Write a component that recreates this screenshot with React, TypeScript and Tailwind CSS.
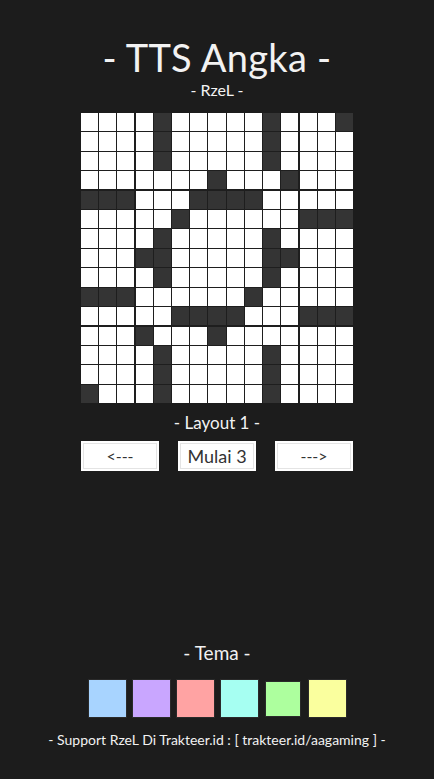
import React from "react";

const BLACK: number[][] = [
  [4, 10, 14],
  [4, 10],
  [4, 10],
  [7, 11],
  [0, 1, 2, 6, 7, 8, 9],
  [5, 12, 13, 14],
  [4, 10],
  [3, 4, 10, 11],
  [4, 10],
  [0, 1, 2, 9],
  [5, 6, 7, 8, 12, 13, 14],
  [3, 7],
  [4, 10],
  [4, 10],
  [0, 4, 10],
];

const SWATCHES = [
  { c: "bg-[#a8d4ff]", small: false },
  { c: "bg-[#c9a6ff]", small: false },
  { c: "bg-[#ffa3a3]", small: false },
  { c: "bg-[#a6fff2]", small: false },
  { c: "bg-[#adff9e]", small: true },
  { c: "bg-[#faff9e]", small: false },
];

export default function App() {
  const cells: React.ReactNode[] = [];
  for (let r = 0; r < 15; r++) {
    for (let c = 0; c < 15; c++) {
      const black = BLACK[r].includes(c);
      cells.push(
        <div key={`${r}-${c}`} className={black ? "bg-[#343434]" : "bg-white"} />
      );
    }
  }
  return (
    <div
      className="w-[434px] h-[779px] bg-[#1c1c1c] text-[#f2f2f2] flex flex-col items-center overflow-hidden"
      style={{ fontFamily: "Lato, 'Noto Sans', sans-serif" }}
    >
      <div className="mt-[38px] text-[38px] leading-none tracking-[0.3px]">- TTS Angka -</div>
      <div className="mt-[6px] text-[16px] leading-none">- RzeL -</div>
      <div className="mt-[15px] w-[272px] h-[290px] grid grid-cols-15 grid-rows-15 gap-[1.2px] bg-[#1e1e1e]">
        {cells}
      </div>
      <div className="mt-[11px] text-[17px] leading-none">- Layout 1 -</div>
      <div className="mt-[10px] w-[272px] flex justify-between">
        {["<---", "Mulai 3", "--->"].map((t, i) => (
          <div key={i} className="w-[78px] h-[30px] bg-white p-[2px]">
            <div
              className={`w-full h-full border border-[#e4e4e4] flex items-center justify-center text-[#333333] leading-none ${
                i === 1 ? "text-[18px]" : "text-[16px]"
              }`}
            >
              {t}
            </div>
          </div>
        ))}
      </div>
      <div className="mt-[172px] text-[19px] leading-none">- Tema -</div>
      <div className="mt-[17px] flex gap-[5px] items-center">
        {SWATCHES.map((s, i) => (
          <div
            key={i}
            className={`${s.c} border border-[#2a2a2a] ${
              s.small ? "w-[36px] h-[36px] mx-[1.5px]" : "w-[39px] h-[39px]"
            }`}
          />
        ))}
      </div>
      <div className="mt-[15px] text-[14px] leading-none">
        - Support RzeL Di Trakteer.id : [ trakteer.id/aagaming ] -
      </div>
    </div>
  );
}
